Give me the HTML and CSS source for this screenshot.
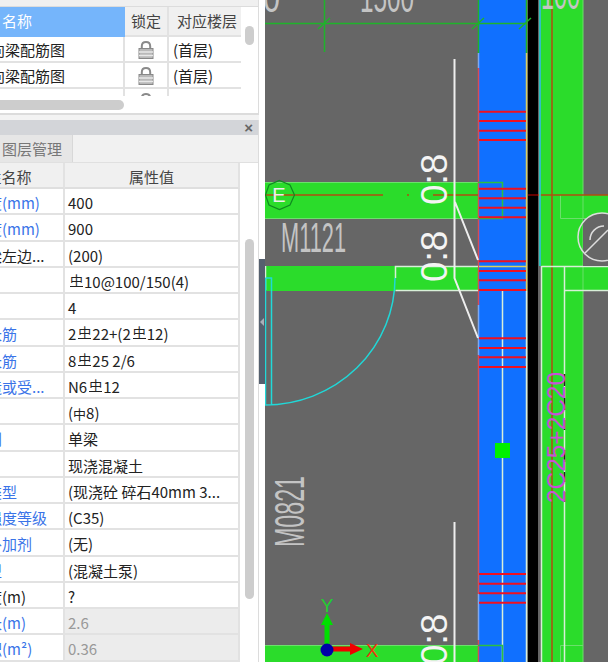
FILE: index.html
```html
<!DOCTYPE html>
<html lang="zh-CN">
<head>
<meta charset="utf-8">
<title>图层管理</title>
<link rel="stylesheet" href="styles.css">
</head>
<body>
<div class="app">
  <div class="panels">
    <section class="layer-panel">
      <div class="layer-table">
        <div class="lh lh-name">名称</div><div class="lh">锁定</div><div class="lh lh-floor">对应楼层</div>
        <div class="lc lc-name">纵向梁配筋图</div>
        <div class="lc lc-lock"><svg class="lock" viewBox="0 0 16 18"><path class="shackle" d="M3.800 8V5.200C3.800 2.600 5.400 1 8 1s4.200 1.600 4.200 4.200V8"/><rect class="lock-body" x="1" y="7.500" width="14" height="10"/><path class="lock-bar" d="M1 11h14M1 14.500h14"/></svg></div>
        <div class="lc">(首层)</div>
        <div class="lc lc-name">横向梁配筋图</div>
        <div class="lc lc-lock"><svg class="lock" viewBox="0 0 16 18"><path class="shackle" d="M3.800 8V5.200C3.800 2.600 5.400 1 8 1s4.200 1.600 4.200 4.200V8"/><rect class="lock-body" x="1" y="7.500" width="14" height="10"/><path class="lock-bar" d="M1 11h14M1 14.500h14"/></svg></div>
        <div class="lc">(首层)</div>
        <div class="lc lc-name"></div>
        <div class="lc lc-lock"><svg class="lock" viewBox="0 0 16 18"><path class="shackle" d="M3.800 8V5.200C3.800 2.600 5.400 1 8 1s4.200 1.600 4.200 4.200V8"/></svg></div>
        <div class="lc"></div>
      </div>
      <div class="thumb thumb-h"></div>
      <div class="thumb thumb-v-top"></div>
    </section>
    <section class="prop-panel">
      <div class="prop-title"><span class="close">×</span></div>
      <div class="tabs"><div class="tab">图层管理</div></div>
      <div class="prop-table">
        <div class="ph">属性名称</div><div class="ph">属性值</div>
        <div class="pn link">截面宽度(mm)</div><div class="pv">400</div>
        <div class="pn link">截面高度(mm)</div><div class="pv">900</div>
        <div class="pn">轴线距梁左边...</div><div class="pv">(200)</div>
        <div class="pn link">箍筋</div><div class="pv"><span class="rebar">中</span>10@100/150(4)</div>
        <div class="pn link">肢数</div><div class="pv">4</div>
        <div class="pn link">上部通长筋</div><div class="pv">2<span class="rebar">中</span>22+(2<span class="rebar">中</span>12)</div>
        <div class="pn link">下部通长筋</div><div class="pv">8<span class="rebar">中</span>25 2/6</div>
        <div class="pn link">侧面构造或受...</div><div class="pv">N6<span class="rebar">中</span>12</div>
        <div class="pn link">拉筋</div><div class="pv">(<span class="plain">中</span>8)</div>
        <div class="pn link">结构类别</div><div class="pv">单梁</div>
        <div class="pn">材质</div><div class="pv">现浇混凝土</div>
        <div class="pn link">混凝土类型</div><div class="pv">(现浇砼 碎石40mm 3...</div>
        <div class="pn link">混凝土强度等级</div><div class="pv">(C35)</div>
        <div class="pn link">混凝土外加剂</div><div class="pv">(无)</div>
        <div class="pn link">泵送类型</div><div class="pv">(混凝土泵)</div>
        <div class="pn">泵送高度(m)</div><div class="pv">?</div>
        <div class="pn link">截面周长(m)</div><div class="pv muted">2.6</div>
        <div class="pn link">截面面积(m²)</div><div class="pv muted">0.36</div>
      </div>
      <div class="thumb thumb-v-prop"></div>
    </section>
  </div>
  <div class="splitter"><div class="handle"><span class="handle-arrow"></span></div></div>
  <svg class="canvas" viewBox="265 0 343 662" preserveAspectRatio="none">
    <defs><clipPath id="right-of-column"><rect x="583" y="190" width="30" height="110"/></clipPath></defs>
    <rect class="bg" x="265" y="0" width="343" height="662"/>

    <!-- horizontal beams -->
    <rect class="beam" x="265" y="182" width="213" height="37"/>
    <rect class="beam" x="265" y="266" width="213" height="25"/>
    <rect class="beam" x="265" y="645" width="213" height="17"/>
    <path class="beam-edge" d="M265 182.500H478M265 218.500H478M265 645.500H478"/>
    <rect class="beam" x="541" y="0" width="42" height="662"/>
    <rect class="beam" x="583" y="195" width="25" height="24"/>
    <rect class="beam" x="583" y="266" width="25" height="25"/>
    <path class="beam-edge" d="M583 0V662M560.500 195V218.500H608M560.500 662V645.500H583"/>

    <!-- column -->
    <rect class="col-blue" x="479" y="0" width="47" height="662"/>
    <rect class="col-black" x="528" y="0" width="10" height="662"/>
    <path class="green-line" d="M478.500 0V53M526.500 0V53"/>
    <path class="edge-yellow" d="M526.500 53V291"/>
    <path class="edge-lblue" d="M478.500 53V68M478.500 305V355M478.500 594V640"/>
    <path class="edge-red" d="M478.500 68V305M478.500 355V594M478.500 640V662"/>
    <path class="edge-yellow" d="M479 266.500H526"/>
    <path class="white-soft" d="M502.500 291V662M526.500 291V662"/>
    <path class="inner-green" d="M478 182.500H502.500V218.500H478M478 645.500H502.500V662"/>
    <rect class="grip" x="495" y="443" width="15" height="15"/>

    <!-- dimensions -->
    <path class="green-line" d="M265 23.500H526M324.500 0V52"/>
    <path class="green-line" d="M318 29L330 18M472 29L484 18M519 29L531 18"/>

    <!-- axis lines -->
    <path class="axis" d="M265 195H383M407 195H409M433 195H478M552 0V662M538 195H608"/>
    <path class="axis-dark" d="M528 195H538"/>

    <!-- white outlines -->
    <path class="white-soft" d="M395.500 278V266.500H478M395.500 290.500H478M265.500 266V290M541.500 266.500H608M541.500 266V662M564.500 266V662M564.500 290.500H608"/>
    <path class="cyan" d="M540 0V266"/>
    <path class="white" d="M454.500 59V278L478 338M455 202L478 260M454.500 522V662"/>

    <!-- door -->
    <path class="cyan-thin" d="M265.500 278H271.500V405M395 278A130 127 0 0 1 265 405M265.500 278V405"/>

    <!-- grid bubbles -->
    <polygon class="bubble" points="279.500,180.500 290,185 294.500,195 290,205 279.500,209.500 269,205 265.500,195 269,185"/>
    <text class="bubble-label" x="279" y="202">E</text>
    <rect class="bubble-fill" x="583" y="219" width="25" height="47"/>
    <circle class="bubble-fill" cx="602" cy="237" r="24" clip-path="url(#right-of-column)"/>
    <circle class="ring" cx="602" cy="237" r="24"/>
    <path class="ring" d="M585 253L608 230M590 240A14 14 0 0 1 604 226"/>

    <!-- stirrups -->
    <path class="stirrup" d="M479 111.700H526M479 121H526M479 130.700H526M479 140H526M479 188.700H526M479 198.300H526M479 207.700H526M479 217.300H526M479 261.300H526M479 271H526M479 280.300H526M479 290H526M479 338.300H526M479 348H526M479 357.300H526M479 367H526M479 574H526M479 583.700H526M479 593.300H526M479 602.700H526"/>

    <!-- labels -->
    <text class="dim" x="263" y="12" textLength="17" lengthAdjust="spacingAndGlyphs">0</text>
    <text class="dim" x="360" y="12" textLength="54" lengthAdjust="spacingAndGlyphs">1500</text>
    <text class="dim" x="541" y="9" textLength="39" lengthAdjust="spacingAndGlyphs">100</text>
    <text class="dim" x="281" y="252" textLength="65" lengthAdjust="spacingAndGlyphs">M1121</text>
    <text class="dim" transform="translate(304 547) rotate(-90)" textLength="71" lengthAdjust="spacingAndGlyphs">M0821</text>
    <text class="elev" transform="translate(447 205) rotate(-90)">0:8</text>
    <text class="elev" transform="translate(447 282) rotate(-90)">0:8</text>
    <text class="elev" transform="translate(447 665) rotate(-90)">0:8</text>
    <path class="dash-black" d="M564.500 374V386M564.500 398V410M564.500 420V430M564.500 450V462M564.500 472V482M564.500 492V502"/>
    <text class="rebar-note" transform="translate(565 503) rotate(-90)" textLength="131" lengthAdjust="spacingAndGlyphs">2C25+2C20</text>

    <!-- UCS -->
    <path class="ucs-red" d="M327 646.500H350V643L363 649L350 655V651.500H327Z"/>
    <path class="ucs-green" d="M324.500 650V625H321L327 613L333 625H329.500V650Z"/>
    <circle class="ucs-origin" cx="327" cy="650" r="6.500"/>
    <text class="ucs-y" x="327" y="612">Y</text>
    <text class="ucs-x" x="372" y="657">X</text>
  </svg>
</div>
</body>
</html>
```
FILE: styles.css
```css
* { box-sizing: border-box; }
html, body { margin: 0; height: 100%; overflow: hidden; background: #fff; }
body { font-family: "Noto Sans CJK SC", "Noto Sans", sans-serif; font-size: 15px; color: #222; }

.app { display: flex; width: 608px; height: 662px; overflow: hidden; }
.panels { width: 259px; flex: none; display: flex; flex-direction: column; gap: 5px; background: #f3f3f3; }

.splitter { width: 6px; flex: none; background: #fff; padding-top: 259px; }
.handle { height: 125px; background: #55606e; display: flex; align-items: center; justify-content: center; }
.handle-arrow { width: 0; height: 0; border: 4px solid transparent; border-right: 4px solid #aab0b8; border-left: 0; }

.canvas { flex: 1; display: block; height: 662px; }

/* top panel */
.layer-panel { position: relative; height: 115px; flex: none; background: #fff; border-right: 1px solid #dcdcdc; border-bottom: 2px solid #dcdcdc; overflow: hidden; padding-top: 5px; }
.layer-panel::before { content: ""; position: absolute; left: 0; right: 0; top: 0; height: 6px; background: #f0f0f0; border-bottom: 1px solid #dcdcdc; }
.layer-table { display: grid; grid-template-columns: 150px 44px 72px; grid-template-rows: 32px 26px 26px 26px; height: 91px; margin-left: -25px; overflow: hidden; width: 266px; }
.lh { background: #f0f0f0; color: #444; text-align: center; line-height: 31px; border-right: 2px solid #e2e2e2; border-bottom: 2px solid #e2e2e2; white-space: nowrap; }
.lh-floor { border-right: 0; padding-left: 4px; }
.lh-name { background: #75b5fb; color: #fff; text-align: left; padding-left: 27px; border: 0; }
.lc { line-height: 25px; border-right: 2px solid #e2e2e2; border-bottom: 2px solid #e2e2e2; white-space: nowrap; padding-left: 4px; overflow: hidden; }
.lc:nth-child(3n) { border-right: 0; }
.lc-name { padding-left: 0; }
.lc-lock { display: flex; justify-content: center; padding: 4px 1px 0 0; }
.lock { width: 16px; height: 18px; flex: none; }
.shackle { fill: none; stroke: #8a8a8a; stroke-width: 2; }
.lock-body { fill: #b9b9b9; stroke: #888; }
.lock-bar { fill: none; stroke: #e8e8e8; stroke-width: 1.500; }

.thumb { position: absolute; background: #cdcdcd; border-radius: 5px; }
.thumb-h { left: -20px; top: 100px; width: 144px; height: 10px; }
.thumb-v-top { left: 245px; top: 26px; width: 9px; height: 19px; }

/* bottom panel */
.prop-panel { position: relative; flex: 1; background: #fff; overflow: hidden; border-right: 1px solid #dcdcdc; }
.prop-title { height: 15px; background: #d3d5d9; display: flex; justify-content: flex-end; padding-right: 5px; }
.close { font-family: "Liberation Sans", sans-serif; font-size: 15px; line-height: 15px; font-weight: bold; color: #666; }
.tabs { height: 28px; background: #f1f1f1; border-bottom: 1px solid #e0e0e0; display: flex; }
.tab { width: 73px; background: #e6e6e6; color: #777; padding-left: 2px; line-height: 28px; border-right: 1px solid #d8d8d8; }

.prop-table { display: grid; grid-template-columns: 125px 175px; grid-template-rows: 26px; grid-auto-rows: 26.25px; margin-left: -60px; width: 300px; }
.ph { background: #f0f0f0; color: #444; text-align: center; line-height: 27px; border-right: 2px solid #e2e2e2; border-bottom: 2px solid #dfdfdf; white-space: nowrap; }
.pn, .pv { line-height: 27px; white-space: nowrap; overflow: hidden; border-bottom: 2px solid #e2e2e2; }
.pn { padding-left: 2px; border-right: 2px solid #e2e2e2; color: #222; }
.pn.link { color: #3a74e8; }
.pv { padding-left: 3px; border-right: 2px solid #e2e2e2; }
.pv.muted { background: #ececec; color: #999; }
.rebar { display: inline-block; font-size: 13px; line-height: 12px; vertical-align: 3px; border-bottom: 1.500px solid #222; height: 13px; margin: 0 1px 0 2px; }
.plain { font-size: 13px; }
.thumb-v-prop { left: 245px; top: 119px; width: 9px; height: 360px; }

/* canvas */
.bg { fill: #666; }
.beam { fill: #2bdc2b; }
.beam-edge { fill: none; stroke: #6be06b; stroke-width: 1; }
.col-blue { fill: #1070ff; }
.col-black { fill: #000; }
.green-line { fill: none; stroke: #1fb32b; stroke-width: 1.500; }
.edge-yellow { fill: none; stroke: #d9d060; stroke-width: 1.500; }
.edge-lblue { fill: none; stroke: #7fa8f0; stroke-width: 1.500; }
.edge-red { fill: none; stroke: #d84a5a; stroke-width: 1.500; }
.white-soft { fill: none; stroke: #d8efd8; stroke-width: 1.500; }
.white { fill: none; stroke: #eee; stroke-width: 2; }
.inner-green { fill: none; stroke: #2cc040; stroke-width: 1.500; }
.grip { fill: #00f000; }
.axis { fill: none; stroke: #b04e10; stroke-width: 1.500; }
.axis-dark { fill: none; stroke: #800; stroke-width: 1.500; }
.cyan { fill: none; stroke: #20e0e0; stroke-width: 1.500; }
.cyan-thin { fill: none; stroke: #20d8d8; stroke-width: 1.500; }
.bubble { fill: none; stroke: #0f8a20; stroke-width: 1.200; }
.bubble-label { fill: #eee; font-family: "Liberation Sans", sans-serif; font-size: 20px; text-anchor: middle; }
.bubble-fill { fill: #666; }
.ring { fill: none; stroke: #ddd; stroke-width: 1.500; }
.stirrup { fill: none; stroke: #f01020; stroke-width: 2; }
.dim { fill: #c4c4c4; font-family: "Liberation Sans", sans-serif; font-size: 42px; }
.elev { fill: #f4f4f4; font-family: "Liberation Sans", sans-serif; font-size: 37px; }
.dash-black { fill: none; stroke: #222; stroke-width: 1.500; }
.rebar-note { fill: #c850d8; font-family: "Liberation Sans", sans-serif; font-size: 26px; }
.ucs-red { fill: #f00000; }
.ucs-green { fill: #00e000; }
.ucs-origin { fill: #0000a8; }
.ucs-y { fill: #20d030; font-family: "Liberation Sans", sans-serif; font-size: 19px; text-anchor: middle; }
.ucs-x { fill: #f03010; font-family: "Liberation Sans", sans-serif; font-size: 19px; text-anchor: middle; }
```
